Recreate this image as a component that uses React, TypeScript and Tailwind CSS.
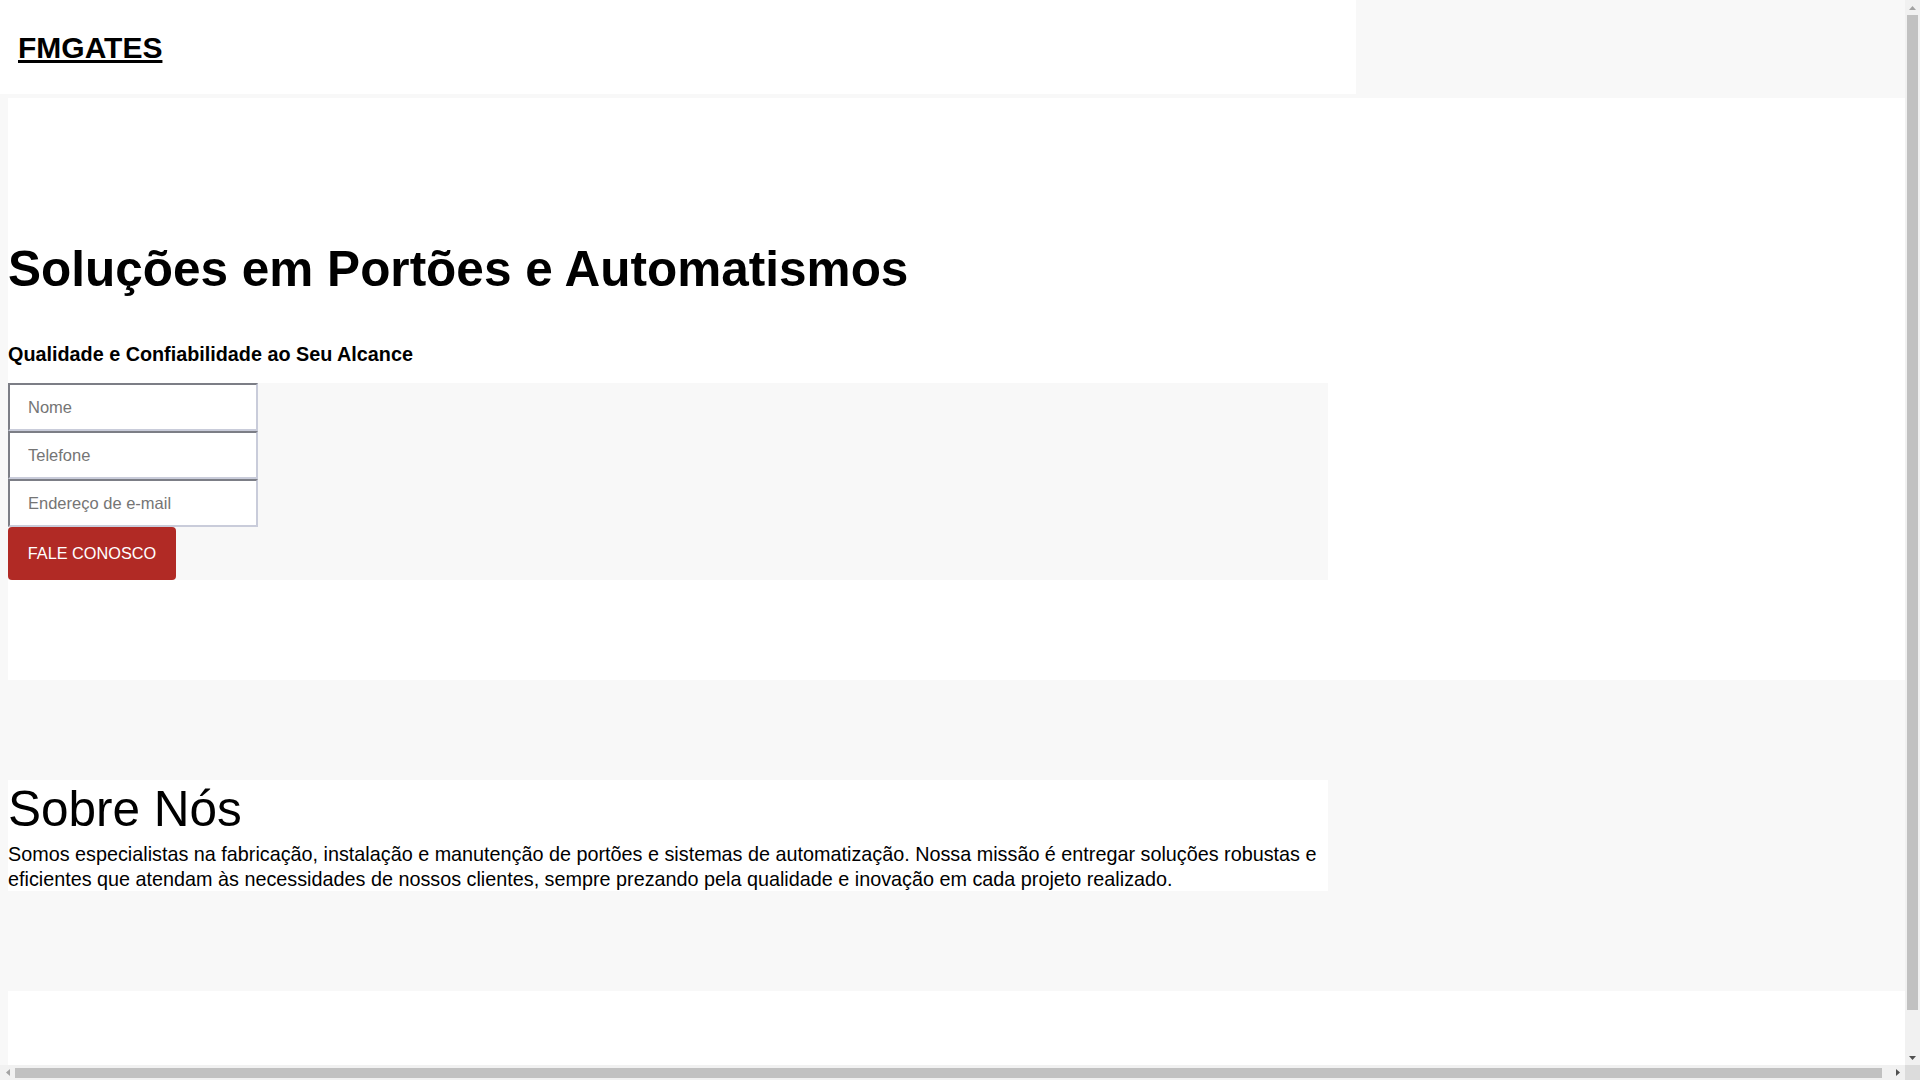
import React from "react";

const inputCls =
  "w-[250px] h-[48px] pl-[18px] pr-4 text-[16.5px] bg-white border-2 border-t-[#7c7e86] border-l-[#7c7e86] border-b-[#c9ccda] border-r-[#c9ccda] placeholder:text-[#757575] outline-none";

export default function App() {
  return (
    <div className="bg-[#f8f8f8] font-['Liberation_Sans',Arial,sans-serif] text-black w-[1913px] overflow-hidden">
      <header className="bg-white w-[1356px] h-[94px] pl-[18px] pt-[31px]">
        <a href="#" className="text-[30px] font-bold leading-[normal] underline text-black">
          FMGATES
        </a>
      </header>
      <div className="h-[4px]" />
      <div className="pl-2">
        <section className="bg-white w-[1905px] pt-[142px] pb-[100px]">
          <h1 className="text-[49.5px] font-bold leading-[normal]">Soluções em Portões e Automatismos</h1>
          <h3 className="text-[19.8px] font-bold leading-[23px] mt-[46px]">
            Qualidade e Confiabilidade ao Seu Alcance
          </h3>
          <form className="bg-[#f8f8f8] w-[1320px] mt-[17px] flex flex-col items-start">
            <input type="text" placeholder="Nome" className={inputCls} />
            <input type="text" placeholder="Telefone" className={inputCls} />
            <input type="email" placeholder="Endereço de e-mail" className={inputCls} />
            <button
              type="button"
              className="w-[168px] h-[53px] bg-[#b12a25] text-white text-[16.3px] rounded-[4px] flex items-center justify-center"
            >
              FALE CONOSCO
            </button>
          </form>
        </section>
        <section className="bg-white w-[1320px] mt-[100px]">
          <h2 className="text-[49.5px] leading-[58px]">Sobre Nós</h2>
          <p className="text-[19.8px] leading-[24.5px] mt-[4px]">
            Somos especialistas na fabricação, instalação e manutenção de portões e sistemas de automatização. Nossa missão é entregar soluções robustas e eficientes que atendam às necessidades de nossos clientes, sempre prezando pela qualidade e inovação em cada projeto realizado.
          </p>
        </section>
        <section className="bg-white w-[1905px] mt-[100px] h-[300px]" />
      </div>

      {/* vertical scrollbar */}
      <div className="fixed top-0 right-0 w-[15px] h-[1065px] bg-[#f1f1f1] flex flex-col items-center">
        <div className="h-[15px] w-full flex items-center justify-center">
          <svg width="7" height="4" viewBox="0 0 7 4"><polygon points="3.5,0 7,4 0,4" fill="#a3a3a3" /></svg>
        </div>
        <div className="w-[11px] h-[995px] bg-[#c1c1c1]" />
        <div className="flex-1" />
        <div className="h-[15px] w-full flex items-center justify-center">
          <svg width="7" height="4" viewBox="0 0 7 4"><polygon points="0,0 7,0 3.5,4" fill="#505050" /></svg>
        </div>
      </div>
      {/* horizontal scrollbar */}
      <div className="fixed bottom-0 left-0 w-[1905px] h-[15px] bg-[#f1f1f1] flex items-center">
        <div className="w-[15px] h-full flex items-center justify-center">
          <svg width="4" height="7" viewBox="0 0 4 7"><polygon points="0,3.5 4,0 4,7" fill="#a3a3a3" /></svg>
        </div>
        <div className="w-[1867px] h-[10px] bg-[#c1c1c1]" />
        <div className="flex-1" />
        <div className="w-[15px] h-full flex items-center justify-center">
          <svg width="4" height="7" viewBox="0 0 4 7"><polygon points="0,0 4,3.5 0,7" fill="#505050" /></svg>
        </div>
      </div>
      <div className="fixed bottom-0 right-0 w-[15px] h-[15px] bg-[#dcdcdc]" />
    </div>
  );
}
